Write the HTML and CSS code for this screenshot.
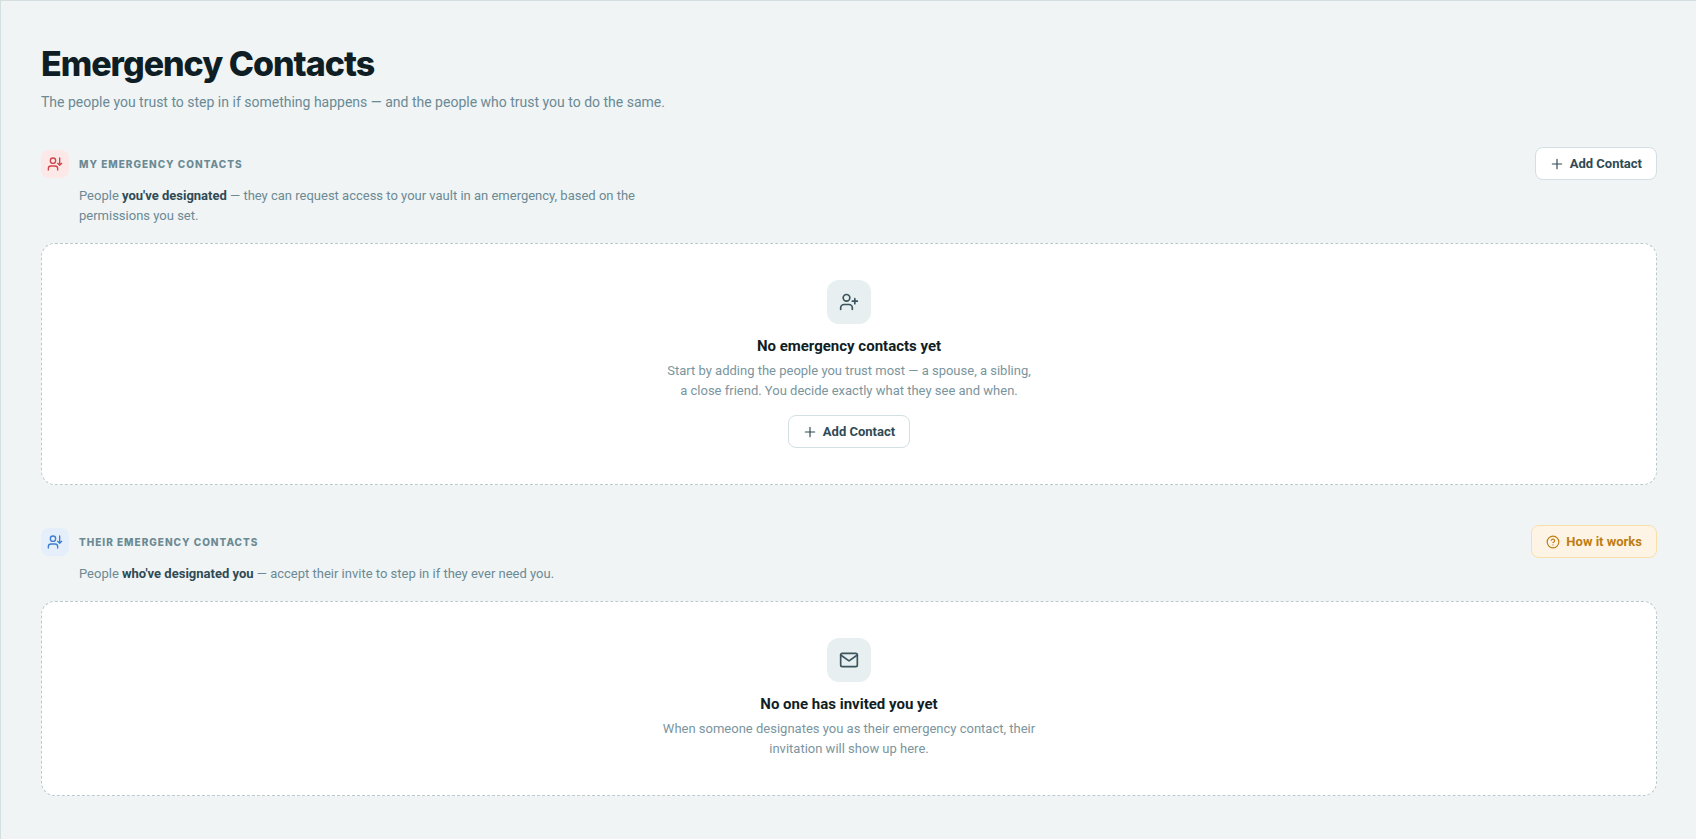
FILE: index.html
```html
<!DOCTYPE html>
<html lang="en">
  <head>
    <meta charset="UTF-8" />
    <meta name="viewport" content="width=device-width, initial-scale=1.0" />
    <title>Emergency Contacts</title>
    <link rel="stylesheet" href="styles.css">
  </head>
  <body>
    <main class="page">
      <header class="page-header">
        <h1 class="page-title">Emergency Contacts</h1>
        <p class="page-subtitle">The people you trust to step in if something happens — and the people who trust you to do the same.</p>
      </header>

      <section class="section">
        <div class="section-header">
          <span class="section-icon red">
            <svg width="16" height="16" viewBox="0 0 24 24" aria-hidden="true">
              <path d="M16 21v-2a4 4 0 0 0-4-4H6a4 4 0 0 0-4 4v2" />
              <circle cx="9" cy="7" r="4" />
              <path d="M19 3v11M16 11l3 3 3-3" />
            </svg>
          </span>
          <h2 class="section-title">My Emergency Contacts</h2>
          <button type="button" class="btn">
            <svg width="14" height="14" viewBox="0 0 24 24" aria-hidden="true">
              <path d="M12 4v16M4 12h16" />
            </svg>
            Add Contact
          </button>
        </div>
        <p class="section-text">People <strong>you've designated</strong> — they can request access to your vault in an emergency, based on the permissions you set.</p>

        <div class="empty-card">
          <span class="empty-icon">
            <svg width="20" height="20" viewBox="0 0 24 24" aria-hidden="true">
              <path d="M16 21v-2a4 4 0 0 0-4-4H6a4 4 0 0 0-4 4v2" />
              <circle cx="9" cy="7" r="4" />
              <path d="M19 8v6M16 11h6" />
            </svg>
          </span>
          <h3 class="empty-title">No emergency contacts yet</h3>
          <p class="empty-text">Start by adding the people you trust most — a spouse, a sibling,<br> a close friend. You decide exactly what they see and when.</p>
          <button type="button" class="btn">
            <svg width="14" height="14" viewBox="0 0 24 24" aria-hidden="true">
              <path d="M12 4v16M4 12h16" />
            </svg>
            Add Contact
          </button>
        </div>
      </section>

      <section class="section">
        <div class="section-header">
          <span class="section-icon blue">
            <svg width="16" height="16" viewBox="0 0 24 24" aria-hidden="true">
              <path d="M16 21v-2a4 4 0 0 0-4-4H6a4 4 0 0 0-4 4v2" />
              <circle cx="9" cy="7" r="4" />
              <path d="M19 3v11M16 11l3 3 3-3" />
            </svg>
          </span>
          <h2 class="section-title">Their Emergency Contacts</h2>
          <button type="button" class="btn btn-help">
            <svg width="14" height="14" viewBox="0 0 24 24" aria-hidden="true">
              <circle cx="12" cy="12" r="10" />
              <path d="M9.1 9a3 3 0 0 1 5.8 1c0 2-2.9 3-2.9 3M12 17h.01" />
            </svg>
            How it works
          </button>
        </div>
        <p class="section-text">People <strong>who've designated you</strong> — accept their invite to step in if they ever need you.</p>

        <div class="empty-card">
          <span class="empty-icon">
            <svg width="20" height="20" viewBox="0 0 24 24" aria-hidden="true">
              <rect x="2" y="4" width="20" height="16" rx="2" />
              <path d="M2 6l10 7 10-7" />
            </svg>
          </span>
          <h3 class="empty-title">No one has invited you yet</h3>
          <p class="empty-text">When someone designates you as their emergency contact, their invitation will show up here.</p>
        </div>
      </section>
    </main>
  </body>
</html>
```
FILE: styles.css
```css
* {
  box-sizing: border-box;
}
body {
  margin: 0;
  font-family: Roboto, "Liberation Sans", sans-serif;
  background-color: #f0f4f5;
  color: #0f1e24;
}
h1,
h2,
h3,
p {
  margin: 0;
}
svg {
  fill: none;
  stroke: currentColor;
  stroke-width: 2;
  stroke-linecap: round;
  stroke-linejoin: round;
}
.page {
  min-height: 100vh;
  padding: 40px 39px 40px 40px;
  border-top: 1px solid #d5dfe2;
  border-left: 1px solid #d5dfe2;
}
.page-header {
  margin-bottom: 35px;
}
.page-title {
  font-family: Inter, "Liberation Sans", sans-serif;
  font-size: 34px;
  line-height: 46px;
  font-weight: 800;
  letter-spacing: -0.03em;
}
.page-subtitle {
  margin-top: 5px;
  font-size: 14px;
  line-height: 20px;
  color: #6b8a94;
}
.section {
  margin-bottom: 40px;
}
.section:last-child {
  margin-bottom: 0;
}
.section-header {
  display: flex;
  align-items: center;
  gap: 10px;
}
.section-icon {
  display: flex;
  align-items: center;
  justify-content: center;
  width: 28px;
  height: 28px;
  border-radius: 8px;
}
.red {
  background-color: #fde8e8;
  color: #d0454c;
}
.blue {
  background-color: #e4effb;
  color: #3f7fd0;
}
.section-title {
  flex: 1;
  font-family: Inter, "Liberation Sans", sans-serif;
  font-size: 10px;
  line-height: 16px;
  font-weight: 800;
  letter-spacing: 0.1em;
  text-transform: uppercase;
  color: #6b8a94;
}
.section-text {
  max-width: 620px;
  margin: 6px 0 17px;
  padding-left: 38px;
  font-size: 13px;
  line-height: 20px;
  color: #6b8a94;
}
.section-text strong {
  color: #2f4a54;
}
.btn {
  display: inline-flex;
  align-items: center;
  gap: 6px;
  height: 33px;
  padding: 0 14px;
  border: 1px solid #d3dfe3;
  border-radius: 8px;
  background-color: #fff;
  color: #2f4a54;
  font-family: inherit;
  font-size: 13px;
  font-weight: 700;
  cursor: pointer;
}
.btn-help {
  border-color: #f8dfa8;
  background-color: #fef4e6;
  color: #bd7d10;
}
.empty-card {
  display: flex;
  flex-direction: column;
  align-items: center;
  padding: 36px 24px;
  border: 1px dashed #b9c9ce;
  border-radius: 14px;
  background-color: #fff;
  text-align: center;
}
.empty-icon {
  display: flex;
  align-items: center;
  justify-content: center;
  width: 44px;
  height: 44px;
  margin-bottom: 12px;
  border-radius: 12px;
  background-color: #e7eff1;
  color: #3b545d;
}
.empty-title {
  font-size: 15px;
  line-height: 20px;
  font-weight: 700;
}
.empty-text {
  max-width: 380px;
  margin-top: 5px;
  font-size: 13px;
  line-height: 20px;
  color: #7b959e;
}
.empty-card .btn {
  margin-top: 14px;
}
```
